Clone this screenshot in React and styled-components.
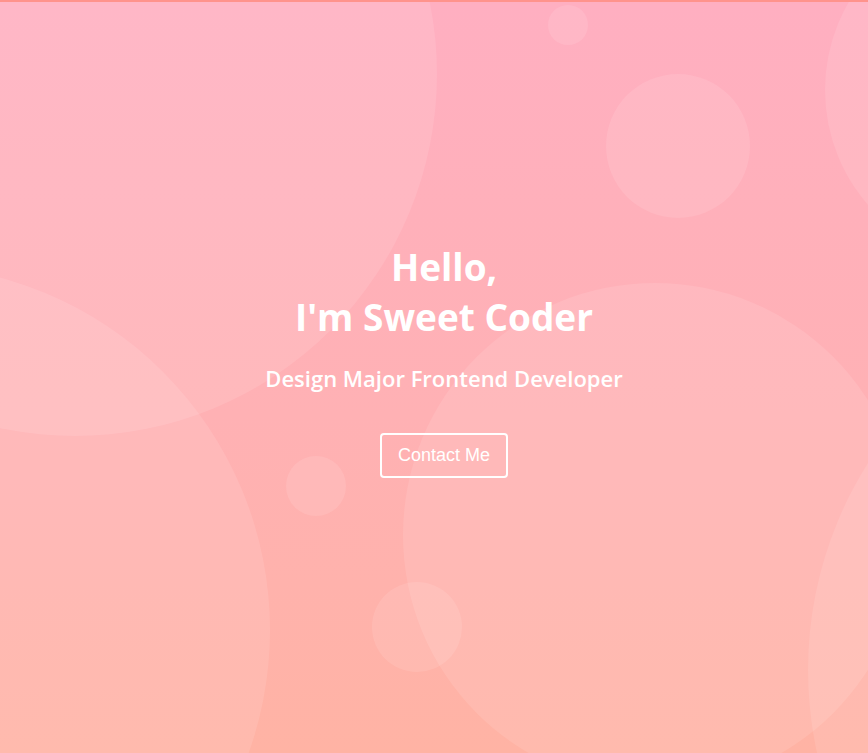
import React from "react"
import styled, { createGlobalStyle } from "styled-components"

const GlobalStyle = createGlobalStyle`
  * {
    box-sizing: border-box;
  }
  html, body {
    margin: 0;
    padding: 0;
  }
  body {
    font-family: "Open Sans", "Liberation Sans", sans-serif;
    overflow: hidden;
  }
`

const Hero = styled.section`
  position: relative;
  height: 753px;
  overflow: hidden;
  display: flex;
  flex-direction: column;
  align-items: center;
  justify-content: center;
  padding: 0 0 35px 20px;
  background: linear-gradient(to bottom, #ffafc1 0%, #ffb1b4 55%, #ffb3a4 100%);
  border-top: 2px solid rgba(255, 120, 120, 0.55);
`

const Bubble = styled.span`
  position: absolute;
  border-radius: 50%;
  background: rgba(255, 255, 255, 0.1);
  pointer-events: none;
`

const Content = styled.div`
  position: relative;
  z-index: 1;
  display: flex;
  flex-direction: column;
  align-items: center;
  text-align: center;
  color: #fff;
`

const Title = styled.h1`
  margin: 0;
  font-size: 37px;
  font-weight: 700;
  line-height: 50px;
`

const Subtitle = styled.p`
  margin: 21px 0 0;
  font-size: 22px;
  font-weight: 600;
  line-height: 30px;
`

const ContactButton = styled.button`
  margin-top: 40px;
  padding: 10px 16px;
  background: transparent;
  color: #fff;
  border: 2px solid #fff;
  border-radius: 4px;
  font-family: "Liberation Sans", Arial, sans-serif;
  font-size: 18px;
  line-height: 21px;
  cursor: pointer;

  &:hover {
    background: rgba(255, 255, 255, 0.15);
  }
`

// cx, cy, r of each background bubble
const bubbles = [
  [75, 74, 362],
  [568, 25, 20],
  [678, 146, 72],
  [1000, 90, 175],
  [-95, 630, 365],
  [655, 535, 252],
  [1195, 670, 387],
  [316, 486, 30],
  [417, 627, 45]
]

function App() {
  return (
    <>
      <GlobalStyle />
      <Hero>
        {bubbles.map(([cx, cy, r], i) => (
          <Bubble key={i} style={{ left: cx - r, top: cy - r - 2, width: r * 2, height: r * 2 }} />
        ))}
        <Content>
          <Title>
            Hello,
            <br />
            I'm Sweet Coder
          </Title>
          <Subtitle>Design Major Frontend Developer</Subtitle>
          <ContactButton>Contact Me</ContactButton>
        </Content>
      </Hero>
    </>
  )
}

export default App
